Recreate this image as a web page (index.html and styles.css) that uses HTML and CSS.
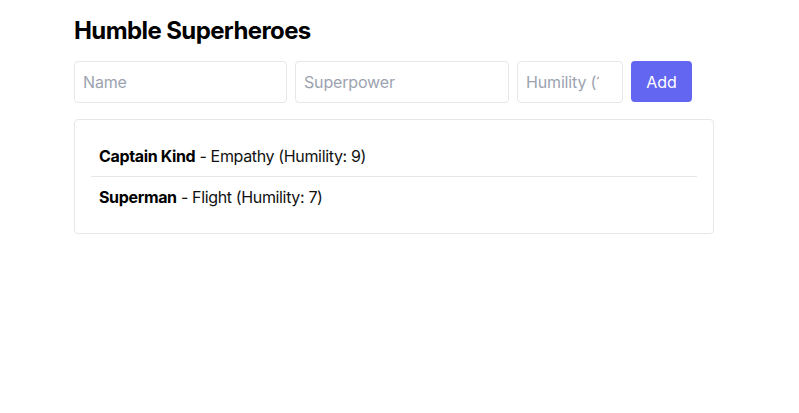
FILE: index.html
```html
<!DOCTYPE html>
<html>
<head>
<meta charset="utf-8">
<link rel="stylesheet" href="styles.css">
</head>
<body>
<div class="app">
  <h1 class="title">Humble Superheroes</h1>
  <form class="hero-form">
    <input class="field field-name" type="text" placeholder="Name">
    <input class="field field-power" type="text" placeholder="Superpower">
    <input class="field field-humility" type="number" placeholder="Humility (1-10)">
    <button class="add-btn" type="button">Add</button>
  </form>
  <ul class="hero-list">
    <li class="hero-item"><strong>Captain Kind</strong> - Empathy (Humility: 9)</li>
    <li class="hero-item"><strong>Superman</strong> - Flight (Humility: 7)</li>
  </ul>
</div>
</body>
</html>
```
FILE: styles.css
```css
* { box-sizing: border-box; }
body {
  margin: 0;
  background: #fff;
  font-family: Inter, "Noto Sans", sans-serif;
  color: #111;
  letter-spacing: -0.022em;
}
.app {
  width: 640px;
  margin-left: 74px;
  padding-top: 16px;
}
.title {
  font-size: 24px;
  font-weight: 700;
  line-height: 29px;
  margin: 0 0 16px 0;
  color: #000;
  letter-spacing: -0.025em;
}
.hero-form {
  display: flex;
  gap: 8px;
  margin-bottom: 16px;
}
.field {
  height: 42px;
  border: 1px solid #e5e7eb;
  border-radius: 4px;
  padding: 0 8px;
  font-family: Inter, sans-serif;
  font-size: 16px;
  letter-spacing: -0.01em;
  color: #111;
  outline: none;
}
.field::placeholder { color: #9ca3af; }
.field-name { width: 213px; }
.field-power { width: 214px; }
.field-humility { width: 106px; }
.add-btn {
  width: 61px;
  height: 41px;
  border: none;
  border-radius: 4px;
  background: #6366f1;
  color: #fff;
  font-family: Inter, sans-serif;
  font-size: 16px;
}
.hero-list {
  list-style: none;
  margin: 0;
  padding: 16px;
  border: 1px solid #e5e7eb;
  border-radius: 4px;
}
.hero-item {
  padding: 8px;
  line-height: 24px;
  font-size: 16px;
}
.hero-item + .hero-item { border-top: 1px solid #e5e7eb; }
.hero-item strong { font-weight: 700; color: #000; }
```
